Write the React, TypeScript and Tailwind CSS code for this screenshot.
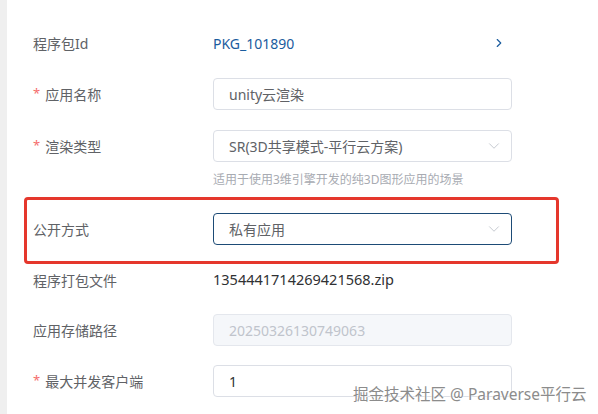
import { ChevronDown, ChevronRight } from "lucide-react";

const font = { fontFamily: '"Noto Sans", "Noto Sans CJK SC", sans-serif' };

function Label({ text, required }: { text: string; required?: boolean }) {
  return (
    <div className="w-[180px] h-8 shrink-0 text-[14px] text-[#606266] flex items-center">
      {required && <span className="text-[#f56c6c] mr-[5px] text-[13px]">*</span>}
      {text}
    </div>
  );
}

function Select({ value, active }: { value: string; active?: boolean }) {
  return (
    <div
      className={`w-[299px] h-8 rounded-[4px] border flex items-center justify-between pl-[15px] pr-[8px] text-[14px] text-[#606266] bg-white ${
        active ? "border-[#1d4b76]" : "border-[#dcdfe6]"
      }`}
    >
      <span>{value}</span>
      <ChevronDown className="w-[18px] h-[18px] text-[#c0c4cc]" strokeWidth={1.2} />
    </div>
  );
}

export default function App() {
  return (
    <div className="w-[598px] h-[414px] bg-white flex overflow-hidden relative" style={font}>
      <div className="w-[7px] shrink-0 bg-[#efefef]" />

      <div className="flex-1 pl-[26px] pt-[27px]">
        {/* 程序包Id */}
        <div className="h-8 flex items-center">
          <Label text="程序包Id" />
          <div className="flex-1 flex items-center justify-between pr-[92px]">
            <span className="text-[14px] text-[#1b5c9e]">PKG_101890</span>
            <ChevronRight className="w-[14px] h-[14px] text-[#1b5c9e]" strokeWidth={2} />
          </div>
        </div>

        {/* 应用名称 */}
        <div className="h-8 mt-[19px] flex items-center">
          <Label text="应用名称" required />
          <div className="w-[299px] h-8 rounded-[4px] border border-[#dcdfe6] flex items-center pl-[15px] text-[14px] text-[#606266]">
            unity云渲染
          </div>
        </div>

        {/* 渲染类型 */}
        <div className="mt-[20px] flex items-start">
          <Label text="渲染类型" required />
          <div className="flex flex-col">
            <Select value="SR(3D共享模式-平行云方案)" />
            <div className="mt-[8px] text-[12px] leading-[20px] text-[#a8abb2]">
              适用于使用3维引擎开发的纯3D图形应用的场景
            </div>
          </div>
        </div>

        {/* 公开方式 */}
        <div className="h-8 mt-[23px] flex items-center">
          <Label text="公开方式" />
          <Select value="私有应用" active />
        </div>

        {/* 程序打包文件 */}
        <div className="h-8 mt-[19px] flex items-center">
          <Label text="程序打包文件" />
          <span className="text-[14.5px] text-[#303133]">1354441714269421568.zip</span>
        </div>

        {/* 应用存储路径 */}
        <div className="h-8 mt-[18px] flex items-center">
          <Label text="应用存储路径" />
          <div className="w-[299px] h-8 rounded-[4px] border border-[#e4e7ed] bg-[#f5f7fa] flex items-center pl-[15px] text-[14px] text-[#c0c4cc]">
            20250326130749063
          </div>
        </div>

        {/* 最大并发客户端 */}
        <div className="h-8 mt-[19px] flex items-center">
          <Label text="最大并发客户端" required />
          <div className="w-[299px] h-8 rounded-[4px] border border-[#dcdfe6] flex items-center pl-[15px] text-[14px] text-[#303133]">
            1
          </div>
        </div>
      </div>

      {/* annotation box */}
      <div className="absolute left-[24px] top-[197px] w-[535px] h-[67px] border-[3px] border-[#e5372c] rounded-[4px]" />

      {/* watermark */}
      <div
        className="absolute left-[353px] top-[383px] text-[15.5px] leading-[22px] text-[#8c8c8c]"
        style={{ textShadow: "0 0 2px #fff, 0 0 2px #fff" }}
      >
        掘金技术社区 @ Paraverse平行云
      </div>
    </div>
  );
}
